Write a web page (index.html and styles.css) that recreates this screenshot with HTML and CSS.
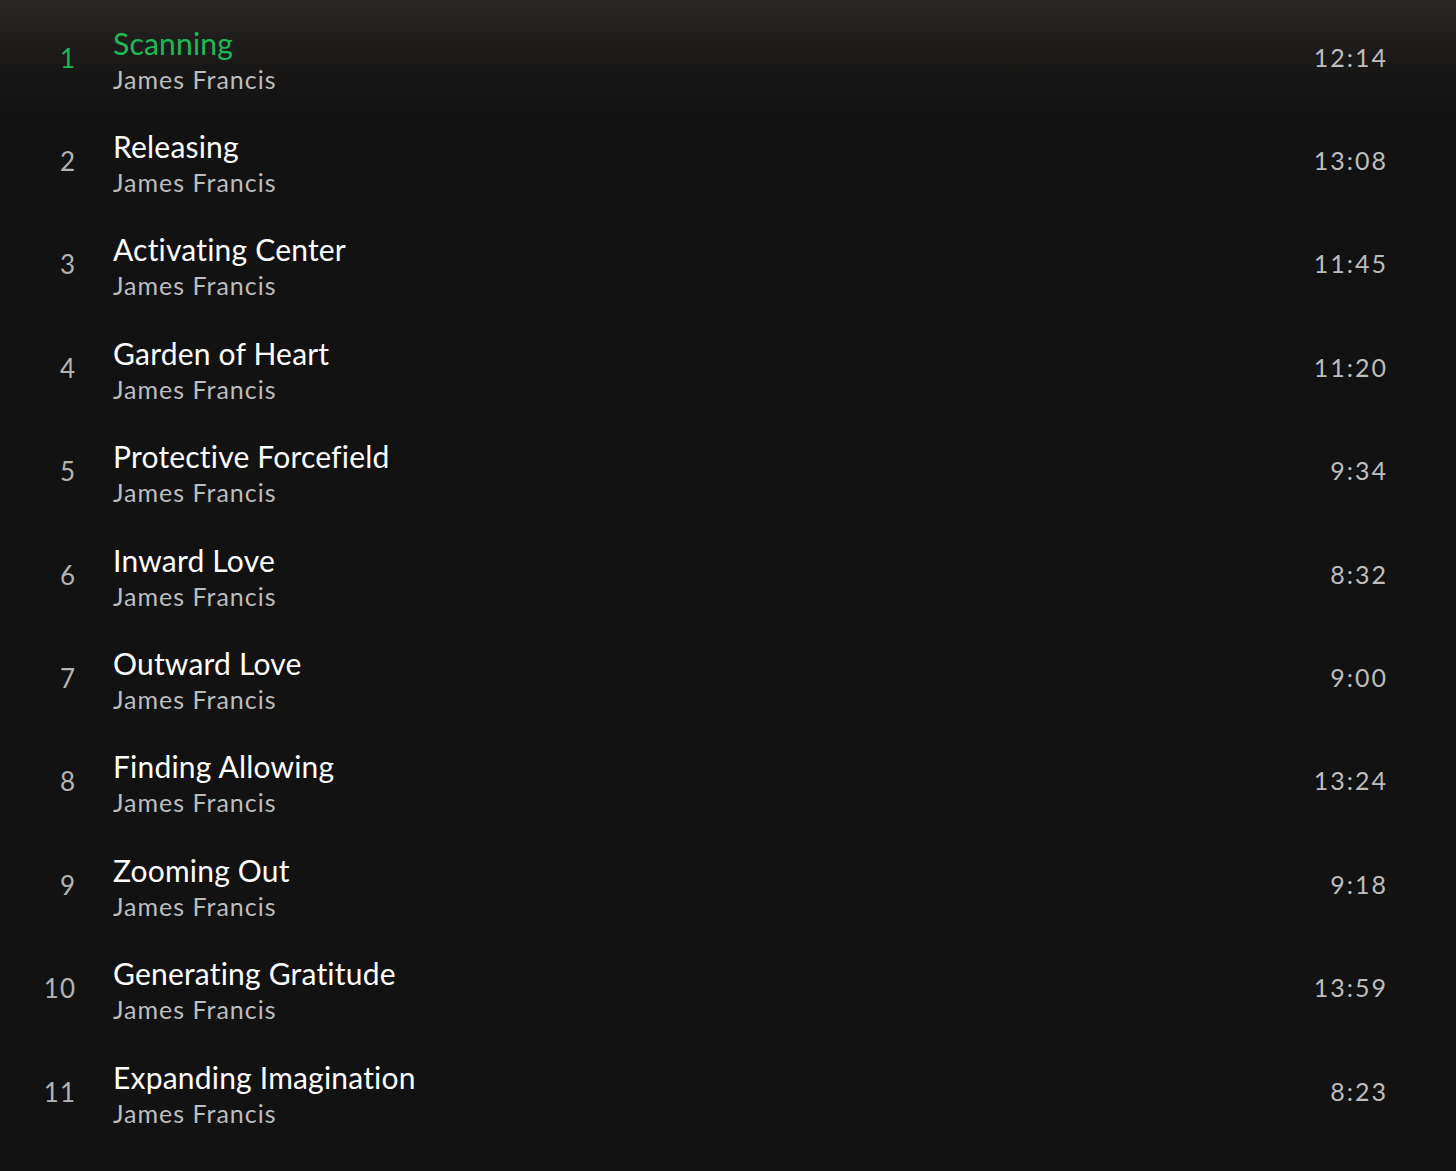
FILE: index.html
```html
<!DOCTYPE html>
<html lang="en">
<head>
    <meta charset="UTF-8">
    <title>Tracks</title>
    <link rel="stylesheet" href="styles.css">
</head>
<body>
    <div class="tracklist">
        <div class="track playing">
            <span class="num">1</span>
            <div class="info"><div class="title">Scanning</div><div class="artist">James Francis</div></div>
            <span class="time">12:14</span>
        </div>
        <div class="track">
            <span class="num">2</span>
            <div class="info"><div class="title">Releasing</div><div class="artist">James Francis</div></div>
            <span class="time">13:08</span>
        </div>
        <div class="track">
            <span class="num">3</span>
            <div class="info"><div class="title">Activating Center</div><div class="artist">James Francis</div></div>
            <span class="time">11:45</span>
        </div>
        <div class="track">
            <span class="num">4</span>
            <div class="info"><div class="title">Garden of Heart</div><div class="artist">James Francis</div></div>
            <span class="time">11:20</span>
        </div>
        <div class="track">
            <span class="num">5</span>
            <div class="info"><div class="title">Protective Forcefield</div><div class="artist">James Francis</div></div>
            <span class="time">9:34</span>
        </div>
        <div class="track">
            <span class="num">6</span>
            <div class="info"><div class="title">Inward Love</div><div class="artist">James Francis</div></div>
            <span class="time">8:32</span>
        </div>
        <div class="track">
            <span class="num">7</span>
            <div class="info"><div class="title">Outward Love</div><div class="artist">James Francis</div></div>
            <span class="time">9:00</span>
        </div>
        <div class="track">
            <span class="num">8</span>
            <div class="info"><div class="title">Finding Allowing</div><div class="artist">James Francis</div></div>
            <span class="time">13:24</span>
        </div>
        <div class="track">
            <span class="num">9</span>
            <div class="info"><div class="title">Zooming Out</div><div class="artist">James Francis</div></div>
            <span class="time">9:18</span>
        </div>
        <div class="track">
            <span class="num">10</span>
            <div class="info"><div class="title">Generating Gratitude</div><div class="artist">James Francis</div></div>
            <span class="time">13:59</span>
        </div>
        <div class="track">
            <span class="num">11</span>
            <div class="info"><div class="title">Expanding Imagination</div><div class="artist">James Francis</div></div>
            <span class="time">8:23</span>
        </div>
    </div>
</body>
</html>
```

FILE: styles.css
```css
html {
    background-color: #121212;
}
body {
    margin: 0;
    min-height: 100vh;
    font-family: Lato, "Noto Sans", sans-serif;
    color: #fff;
    background: linear-gradient(#2a2826 0, #1a1918 60px, #121212 115px, #121212 100%);
}
.tracklist {
    padding: 6px 70px 0 0;
}
.track {
    display: flex;
    align-items: center;
    height: 103.4px;
}
.num {
    width: 76px;
    text-align: right;
    font-size: 26px;
    color: #b3b3b3;
    font-variant-numeric: tabular-nums;
    letter-spacing: 1px;
}
.info {
    flex: 1;
    margin-left: 37px;
    padding-top: 6px;
}
.title {
    font-size: 30px;
    line-height: 36px;
    color: #fff;
    letter-spacing: 0.2px;
}
.artist {
    font-size: 25px;
    line-height: 36px;
    color: #bdbdbd;
    letter-spacing: 1px;
}
.time {
    font-size: 25px;
    color: #bdbdbd;
    font-variant-numeric: tabular-nums;
    letter-spacing: 2px;
    margin-right: -2px;
    padding-bottom: 2px;
}
.playing .num,
.playing .title {
    color: #1db954;
}
```
